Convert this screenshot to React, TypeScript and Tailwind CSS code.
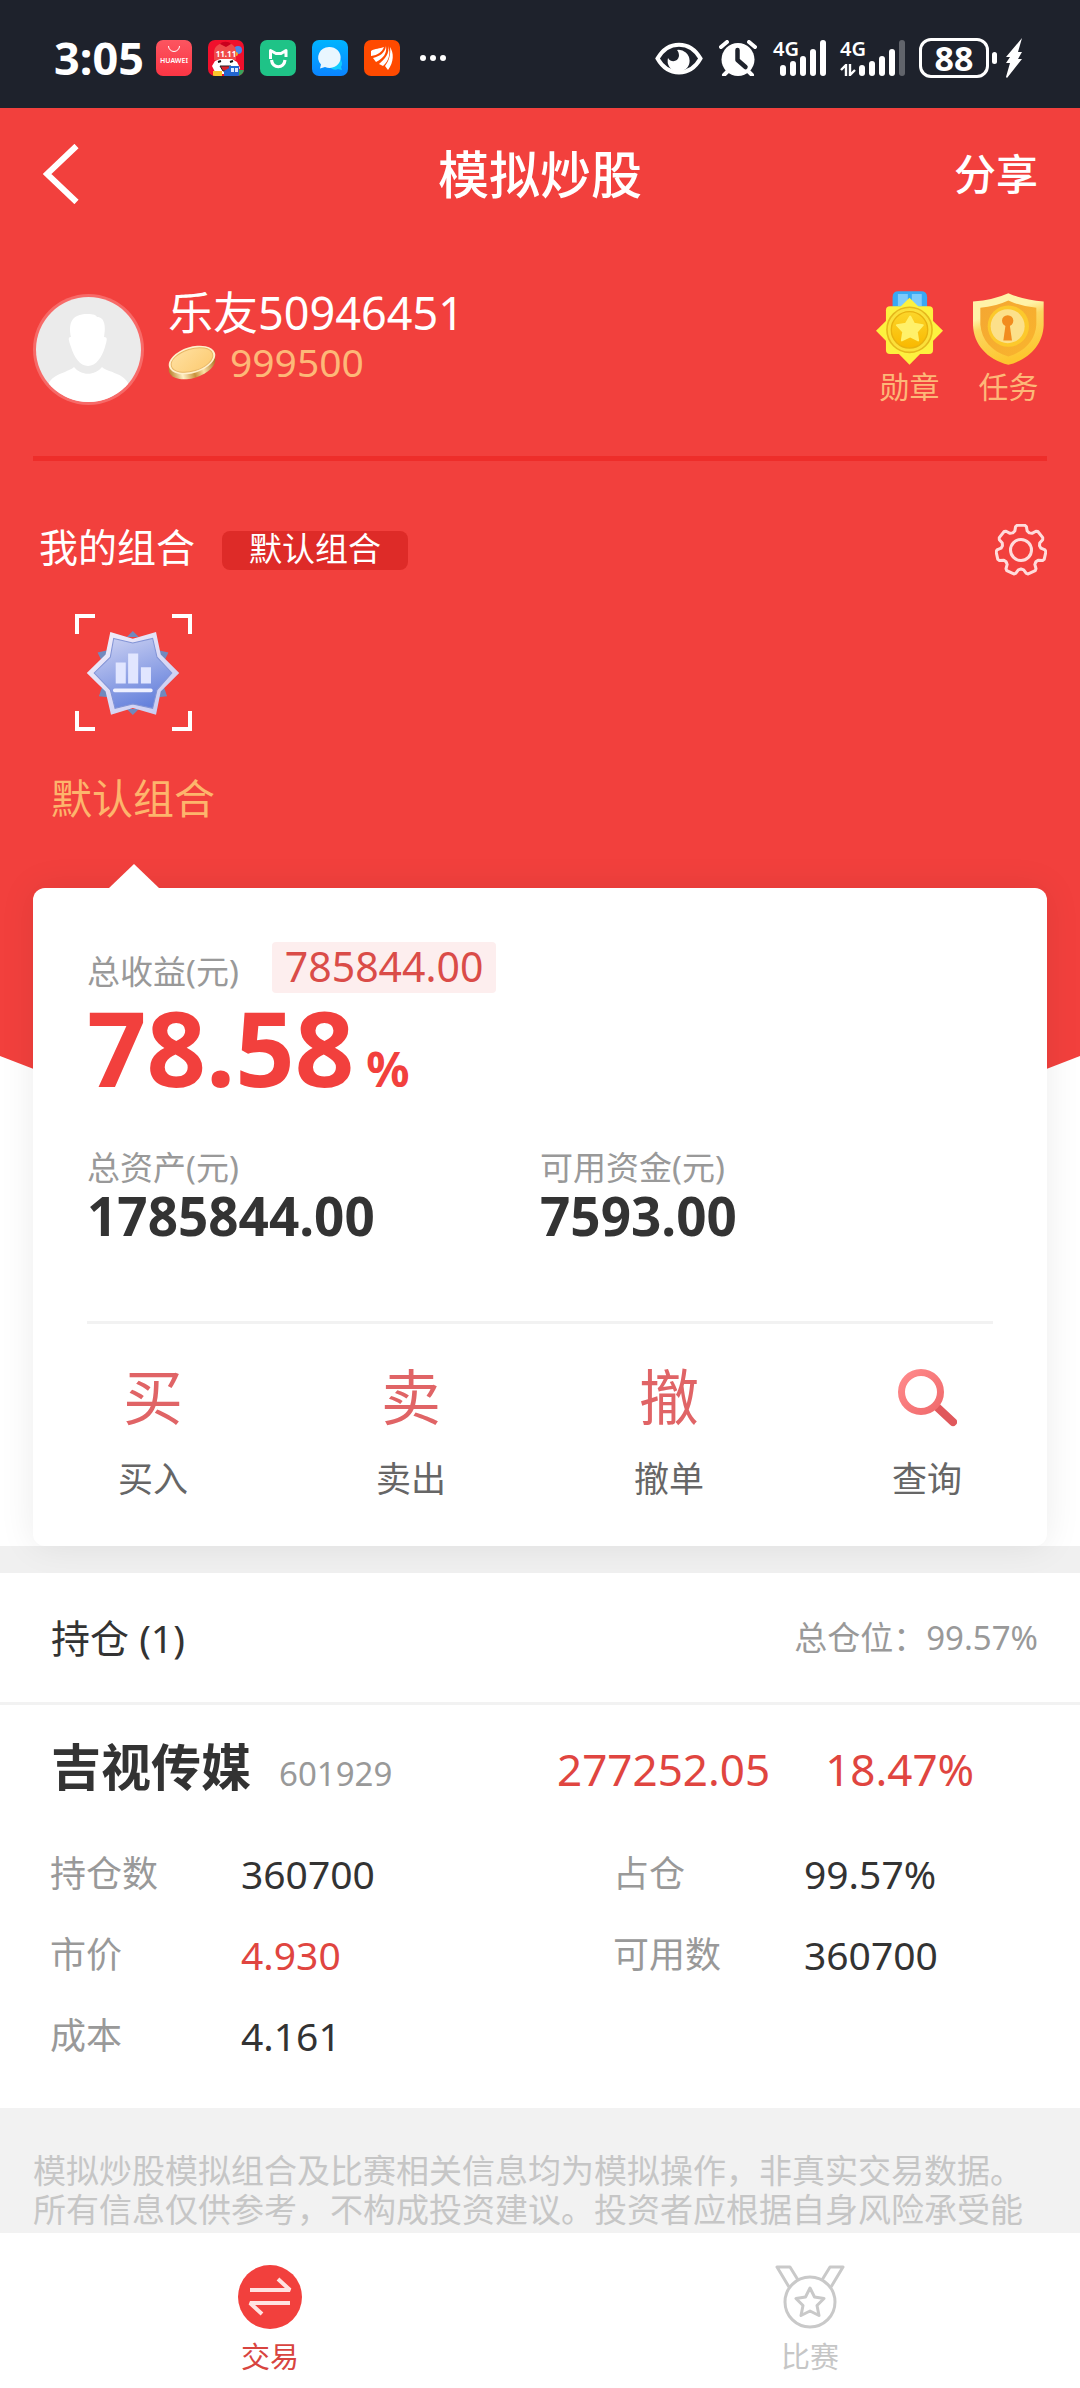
import React from 'react';
import clsx from 'clsx';

interface TradeAction {
  key: string;
  glyph?: string;
  label: string;
}

interface HoldingField {
  label: string;
  value: string;
  up?: boolean;
}

const actions: TradeAction[] = [
  { key: 'buy', glyph: '买', label: '买入' },
  { key: 'sell', glyph: '卖', label: '卖出' },
  { key: 'cancel', glyph: '撤', label: '撤单' },
  { key: 'query', label: '查询' },
];

const holdingFields: HoldingField[] = [
  { label: '持仓数', value: '360700' },
  { label: '占仓', value: '99.57%' },
  { label: '市价', value: '4.930', up: true },
  { label: '可用数', value: '360700' },
  { label: '成本', value: '4.161' },
];

// Outline of a cog with seven teeth, centred on 26,26
const gearPath = (() => {
  const points: string[] = [];
  const step = 360 / 7;
  for (let i = 0; i < 7; i += 1) {
    const base = i * step - 90;
    [[24, -13], [25, -9], [25, 9], [24, 13], [20, 18], [19, step / 2], [20, step - 18]].forEach(([r, offset]) => {
      const angle = ((base + offset) * Math.PI) / 180;
      points.push(`${(26 + r * Math.cos(angle)).toFixed(2)},${(26 + r * Math.sin(angle)).toFixed(2)}`);
    });
  }
  return points.join(' ');
})();

const NotificationIcons: React.FC = () => (
  <div className="flex items-center gap-4">
    <svg className="size-9" viewBox="0 0 36 36" aria-hidden="true">
      <defs>
        <linearGradient id="huawei" x1="0" y1="0" x2="0" y2="1">
          <stop offset="0" stopColor="#fc5560" />
          <stop offset="1" stopColor="#fb3544" />
        </linearGradient>
      </defs>
      <rect width="36" height="36" rx="7" fill="url(#huawei)" />
      <path d="M12.500 6a5.500 5.500 0 0 0 11 0" fill="none" stroke="#fff" strokeWidth="1" />
      <text x="18" y="23" textAnchor="middle" fill="#fff" fontSize="7" fontWeight="600" fontFamily="Noto Sans">
        HUAWEI
      </text>
    </svg>
    <svg className="size-9" viewBox="0 0 36 36" aria-hidden="true">
      <defs>
        <clipPath id="saleClip">
          <rect width="36" height="36" rx="7" />
        </clipPath>
      </defs>
      <g clipPath="url(#saleClip)">
        <rect width="36" height="36" fill="#f0102c" />
        <circle cx="30" cy="10" r="4" fill="#4a86e8" />
        <circle cx="28" cy="14" r="2" fill="#f6a623" />
        <path d="M6 20V13C6 6 11 3 18 3s10 4 10 9v8z" fill="#ef4a4a" />
        <path d="M12 4c2-3 9-3 11 0l-5 3z" fill="#c9001d" />
        <path d="M4 26l3-5 5-2h12l5 3 3 6-4 6H8z" fill="#fff" />
        <path d="M10 22l3-1M22 22l3-1" stroke="#111" strokeWidth="2" />
        <path d="M12 26h11l-2 5h-6z" fill="#d8232c" stroke="#222" strokeWidth="1" />
        <path d="M5 31h9v6H5z" fill="#fbc62c" />
        <path d="M16 31l5-3v-2h10v11H16z" fill="#2367d1" />
        <path d="M23 28h3v4h-3zM27 28h3v4h-3z" fill="#dfeaff" />
        <path d="M31 30h5v6h-5z" fill="#3aa45b" />
        <text x="18" y="17" textAnchor="middle" fill="#fff" fontSize="8" fontWeight="700" fontFamily="Noto Sans">
          11.11
        </text>
      </g>
    </svg>
    <svg className="size-9" viewBox="0 0 36 36" aria-hidden="true">
      <rect width="36" height="36" rx="7" fill="#1fc387" />
      <path d="M10.500 19v-8.500l5.500 3h5l5-3V17" fill="none" stroke="#fff" strokeWidth="3" strokeLinejoin="round" />
      <path d="M11.500 20c1 9 12.500 9 13.500 0" fill="none" stroke="#fff" strokeWidth="3.200" />
    </svg>
    <svg className="size-9" viewBox="0 0 36 36" aria-hidden="true">
      <defs>
        <linearGradient id="chatBg" x1="0" y1="0" x2="0" y2="1">
          <stop offset="0" stopColor="#00b4ff" />
          <stop offset="1" stopColor="#0a84ff" />
        </linearGradient>
      </defs>
      <rect width="36" height="36" rx="7" fill="url(#chatBg)" />
      <path d="M28 19a6 6 0 0 1 1 8l1 3-4-1a7 7 0 0 1-9-3z" fill="#12ccff" />
      <path d="M17 7a11 10.500 0 1 1-4 20l-5 1.500 1-4A11 10.500 0 0 1 17 7z" fill="#e9f6ff" />
    </svg>
    <svg className="size-9" viewBox="0 0 36 36" aria-hidden="true">
      <rect width="36" height="36" rx="7" fill="#ff4a00" />
      <path d="M20 7C16 9 11 8 7 11v5c7-1 11-4 13-9z" fill="#fff" />
      <path d="M22 6c-1 7-6 10-13 12l3 4c8-4 11-9 10-16z" fill="#fff" />
      <path d="M24 6c2 7-3 13-9 18l4 2c6-5 8-13 5-20z" fill="#fff" />
      <path d="M26 7c4 6 4 15-2 23l-3-4c4-5 6-12 5-19z" fill="#fff" />
    </svg>
    <svg className="ml-1 h-9 w-7" viewBox="0 0 28 36" aria-hidden="true" fill="#fff">
      <circle cx="3" cy="18" r="3" />
      <circle cx="13" cy="18" r="3" />
      <circle cx="23" cy="18" r="3" />
    </svg>
  </div>
);

const SignalBars: React.FC<{ weak?: boolean }> = ({ weak }) => (
  <div className={clsx('relative h-9', weak ? 'w-[65px]' : 'w-[53px]')}>
    <span className="absolute -top-px left-0 text-[20px] leading-5 font-semibold">4G</span>
    {weak && (
      <svg className="absolute bottom-0 left-0 h-3 w-4" viewBox="0 0 16 12" aria-hidden="true">
        <path d="M6 12V1L1 6M10 0v11l5-5" fill="none" stroke="#fff" strokeWidth="2.400" />
      </svg>
    )}
    <svg className="absolute right-0 bottom-0 h-9 w-[46px]" viewBox="0 0 46 36" fill="#fff" aria-hidden="true">
      <rect x="0" y="25" width="6" height="11" rx="3" />
      <rect x="10" y="21" width="6" height="15" rx="3" />
      <rect x="20" y="16" width="6" height="20" rx="3" />
      <rect x="30" y="9" width="6" height="27" rx="3" />
      <rect x="40" y="0" width="6" height="36" rx="3" fillOpacity={weak ? 0.3 : 1} />
    </svg>
  </div>
);

const StatusBar: React.FC = () => (
  <div className="flex h-[108px] items-center justify-between bg-[#1e222c] pt-2 pr-[57px] pl-[54px] text-white">
    <div className="flex items-center gap-3">
      <span className="text-[45px] leading-[50px] font-bold">3:05</span>
      <NotificationIcons />
    </div>
    <div className="flex items-center">
      <svg className="h-[33px] w-12" viewBox="0 0 48 33" aria-hidden="true">
        <path d="M2.500 16.500C13-2 35-2 45.500 16.500 35 35 13 35 2.500 16.500z" fill="none" stroke="#fff" strokeWidth="4" />
        <path d="M22 8a11 11 0 1 1-9 8c3 5 10 4 11-2 0-3-1-5-2-6z" fill="#fff" />
      </svg>
      <svg className="ml-4 h-9 w-[38px]" viewBox="0 0 38 36" aria-hidden="true">
        <circle cx="19" cy="19.500" r="16.500" fill="#fff" />
        <path d="M2 7l6-5M36 7l-6-5M5 35l5-5M33 35l-5-5" stroke="#fff" strokeWidth="4" strokeLinecap="round" />
        <path d="M18.500 10v10l8 7" fill="none" stroke="#1e222c" strokeWidth="4.500" strokeLinecap="round" strokeLinejoin="round" />
      </svg>
      <div className="ml-4">
        <SignalBars />
      </div>
      <div className="ml-3.5">
        <SignalBars weak />
      </div>
      <div className="ml-3.5 flex h-10 w-[70px] items-center justify-center rounded-xl border-3 border-white text-[34px] leading-8 font-bold">
        88
      </div>
      <span className="ml-[3px] h-3 w-[5px] rounded-full bg-white" />
      <svg className="ml-2 h-10 w-[18px]" viewBox="0 0 18 40" aria-hidden="true">
        <path d="M17 0L1 19h4l-4 6h4L1 39l1 1 15-19h-4l4-7h-4z" fill="#fff" />
      </svg>
    </div>
  </div>
);

const CoinIcon: React.FC = () => (
  <svg className="h-9 w-12" viewBox="0 0 48 36" aria-hidden="true">
    <defs>
      <linearGradient id="coinEdge" x1="0" y1="0" x2="1" y2="0">
        <stop offset="0" stopColor="#b9812c" />
        <stop offset="0.250" stopColor="#fff0c4" />
        <stop offset="0.500" stopColor="#c9923b" />
        <stop offset="0.700" stopColor="#f9e2a6" />
        <stop offset="1" stopColor="#a8701f" />
      </linearGradient>
      <linearGradient id="coinFace" x1="0" y1="0" x2="1" y2="1">
        <stop offset="0" stopColor="#ffe0a0" />
        <stop offset="1" stopColor="#fccb72" />
      </linearGradient>
    </defs>
    <ellipse cx="24" cy="21" rx="24" ry="13" transform="rotate(-17 24 21)" fill="url(#coinEdge)" />
    <ellipse cx="24" cy="16" rx="24" ry="13" transform="rotate(-17 24 16)" fill="#fff0cc" />
    <ellipse cx="24" cy="16" rx="21.500" ry="11" transform="rotate(-17 24 16)" fill="url(#coinFace)" stroke="#e8b765" strokeWidth="1" />
  </svg>
);

const MedalIcon: React.FC = () => (
  <svg className="h-[74px] w-[67px]" viewBox="0 0 202 221" aria-hidden="true">
    <defs>
      <linearGradient id="medalCore" x1="0" y1="0" x2="0" y2="1">
        <stop offset="0" stopColor="#fcd62a" />
        <stop offset="1" stopColor="#f9b800" />
      </linearGradient>
    </defs>
    <path d="M50 50V18Q50 0 68 0H136Q154 0 154 18V50z" fill="#38a8f4" />
    <path d="M66 44V8h30v36zM108 44V8h30v36z" fill="#7dcbfb" />
    <rect x="30" y="45" width="142" height="144" rx="12" fill="#fdf13f" />
    <path d="M101 19L202 119 101 221 0 119z" fill="#fdf13f" />
    <circle cx="101" cy="116" r="68" fill="#fbe03a" stroke="#e6b81c" strokeWidth="5" />
    <circle cx="101" cy="116" r="55" fill="url(#medalCore)" stroke="#e9b20f" strokeWidth="4" />
    <path
      d="M103 76l12 22 26 4-18 20 4 26-24-12-25 12 4-26-19-20 27-4z"
      fill="#fff16a"
      stroke="#fff16a"
      strokeWidth="6"
      strokeLinejoin="round"
    />
  </svg>
);

const ShieldIcon: React.FC = () => (
  <svg className="h-[74px] w-[71px]" viewBox="0 -4 213 221" aria-hidden="true">
    <defs>
      <linearGradient id="shieldRim" x1="0" y1="0" x2="0.300" y2="1">
        <stop offset="0.350" stopColor="#fff3a8" />
        <stop offset="0.500" stopColor="#fcd660" />
        <stop offset="1" stopColor="#fdc62f" />
      </linearGradient>
      <linearGradient id="shieldBody" x1="0" y1="0" x2="1" y2="1">
        <stop offset="0" stopColor="#f4a632" />
        <stop offset="1" stopColor="#f9b52d" />
      </linearGradient>
    </defs>
    <path d="M106 2Q150 22 212 27V98C210 155 170 200 106 217 42 200 2 155 0 98V27Q62 22 106 2z" fill="url(#shieldRim)" />
    <path d="M106 24Q145 42 190 46V96C187 142 158 176 106 192 54 176 26 142 22 96V46Q68 42 106 24z" fill="url(#shieldBody)" />
    <circle cx="106" cy="101" r="62" fill="#fcc92c" />
    <circle cx="104" cy="101" r="51" fill="#fce08a" />
    <circle cx="104" cy="85" r="17" fill="#f28c1e" />
    <path d="M98 95h12l7 49H91z" fill="#f28c1e" />
  </svg>
);

const PortfolioBadge: React.FC = () => (
  <svg className="h-[84px] w-[94px]" viewBox="0 0 275 250" aria-hidden="true">
    <defs>
      <linearGradient id="badgeFill" x1="0.200" y1="0" x2="0.600" y2="1">
        <stop offset="0" stopColor="#c9cff2" />
        <stop offset="1" stopColor="#6581dc" />
      </linearGradient>
      <linearGradient id="badgeRim" x1="0" y1="0" x2="1" y2="1">
        <stop offset="0" stopColor="#f5f0fb" />
        <stop offset="1" stopColor="#c3c8f1" />
      </linearGradient>
    </defs>
    <path d="M137 0l18 18h-36zM32 64l36-8-22 36zM243 64l-36-8 22 36zM36 194l34 4-22-38zM239 194l-34 4 22-38zM137 250l18-18h-36z" fill="#7189bd" />
    <path d="M70 3l67 20 69-20 14 67 55 55-55 55-14 69-69-20-65 20-16-69-56-55 56-55z" fill="url(#badgeRim)" />
    <path d="M80 22l57 14 59-14 13 56 44 47-44 50-13 55-59-13-53 13-14-55-48-50 48-47z" fill="url(#badgeFill)" stroke="#8294d6" strokeWidth="3" />
    <path d="M86 94h30v62H86zM123 67h30v89h-30zM161 108h30v48h-30z" fill="#e1e6ff" />
    <rect x="78" y="171" width="118" height="11" rx="5" fill="#eef0ff" />
  </svg>
);

const ProfileRow: React.FC = () => (
  <div className="mt-[47px] flex items-start justify-between border-b-5 border-[#ee2d2a] pb-[51px]">
    <div className="flex items-start">
      <svg className="mt-[7px] size-[111px]" viewBox="0 0 111 111" role="img" aria-label="头像">
        <defs>
          <clipPath id="avatarClip">
            <circle cx="55.500" cy="55.500" r="52.500" />
          </clipPath>
        </defs>
        <circle cx="55.500" cy="55.500" r="55.500" fill="#f76a68" />
        <g clipPath="url(#avatarClip)">
          <rect width="111" height="111" fill="#ebebeb" />
          <path
            d="M38 43c-3-14 1-23 16-23 7 0 9 1 10 3 8 0 9 10 7 20 4 0 3 3 1 10-3 10-9 19-17 19s-14-9-17-19c-3-8-3-10 0-10z"
            fill="#fff"
          />
          <path d="M41 73c7 9 21 9 28 0 5 5 21 6 26 16v22H16V89c4-9 20-11 25-16z" fill="#fff" />
        </g>
      </svg>
      <div className="ml-6">
        <p className="text-[45px] leading-[52px] text-white">乐友50946451</p>
        <p className="flex items-center gap-3.5 text-[39px] leading-[46px] text-[#fdb878]">
          <CoinIcon />
          999500
        </p>
      </div>
    </div>
    <div className="flex gap-[30px] pt-1 text-[30px] leading-9 text-[#fdb878]">
      <button type="button" className="flex flex-col items-center gap-1">
        <MedalIcon />
        勋章
      </button>
      <button type="button" className="flex flex-col items-center gap-1 pr-[3px]">
        <ShieldIcon />
        任务
      </button>
    </div>
  </div>
);

const PortfolioPicker: React.FC = () => (
  <>
    <div className="mt-[63px] flex items-center">
      <h2 className="pb-1.5 pl-[6px] text-[39px] leading-[46px] text-white">我的组合</h2>
      <span className="ml-[27px] rounded-lg bg-[#de2b28] px-[27px] pb-1 text-[33px] leading-[35px] text-white">默认组合</span>
      <button type="button" className="ml-auto" aria-label="设置">
        <svg className="size-[52px]" viewBox="0 0 52 52" fill="none" stroke="#ffdcdb" strokeWidth="3" strokeLinejoin="round">
          <polygon points={gearPath} />
          <circle cx="26" cy="26" r="10.500" />
        </svg>
      </button>
    </div>
    <button type="button" className="mt-[38px] ml-[18px] flex flex-col items-center">
      <span className="relative flex size-[117px] items-center justify-center">
        <span className="absolute top-0 left-0 size-5 border-t-4 border-l-4 border-white" />
        <span className="absolute top-0 right-0 size-5 border-t-4 border-r-4 border-white" />
        <span className="absolute bottom-0 left-0 size-5 border-b-4 border-l-4 border-white" />
        <span className="absolute right-0 bottom-0 size-5 border-r-4 border-b-4 border-white" />
        <PortfolioBadge />
      </span>
      <span className="mt-[42px] text-[41px] leading-[50px] text-[#fdb56c]">默认组合</span>
    </button>
  </>
);

const SearchIcon: React.FC = () => (
  <svg className="size-[60px]" viewBox="0 0 60 60" fill="none" aria-hidden="true">
    <defs>
      <linearGradient id="lens" x1="0" y1="0" x2="1" y2="1">
        <stop offset="0" stopColor="#ff8a8b" />
        <stop offset="1" stopColor="#f06a6c" />
      </linearGradient>
    </defs>
    <path d="M41 41l15 14" stroke="#e0585c" strokeWidth="8" strokeLinecap="round" />
    <circle cx="24" cy="25" r="19.500" stroke="url(#lens)" strokeWidth="7" />
  </svg>
);

const SummaryCard: React.FC = () => (
  <section className="relative z-10 mx-[33px] -mt-[218px] rounded-xl bg-white px-[54px] pt-[54px] pb-[42px] shadow-[0_0_36px_rgba(0,0,0,0.08)]">
    <svg className="absolute -top-6 left-[76px] h-6 w-[50px]" viewBox="0 0 50 24" aria-hidden="true">
      <path d="M0 24L25 0l25 24z" fill="#fff" />
    </svg>
    <div className="flex items-end gap-[33px]">
      <span className="text-[33px] leading-[42px] text-[#999]">总收益(元)</span>
      <span className="rounded-sm bg-[#fdeeee] px-[13px] pb-0.5 text-[41px] leading-[49px] text-[#da4c48]">785844.00</span>
    </div>
    <p className="flex items-baseline gap-3 text-[104px] leading-[108px] font-bold text-[#f2403d]">
      78.58
      <span className="text-[48px] leading-none">%</span>
    </p>
    <dl className="mt-[47px] grid grid-cols-2">
      <div>
        <dt className="text-[33px] leading-10 text-[#999]">总资产(元)</dt>
        <dd className="text-[53px] leading-[56px] font-bold text-[#333]">1785844.00</dd>
      </div>
      <div>
        <dt className="text-[33px] leading-10 text-[#999]">可用资金(元)</dt>
        <dd className="text-[53px] leading-[56px] font-bold text-[#333]">7593.00</dd>
      </div>
    </dl>
    <div className="mt-[77px] flex justify-between border-t-3 border-[#f2f2f2] pt-[37px]">
      {actions.map((action) => (
        <button key={action.key} type="button" className="flex w-[132px] flex-col items-center gap-[21px]">
          <span className="flex h-[72px] items-center text-[60px] leading-[72px] text-[#e06466]">
            {action.glyph ?? <SearchIcon />}
          </span>
          <span className="text-[35px] leading-[50px] text-[#666]">{action.label}</span>
        </button>
      ))}
    </div>
  </section>
);

const Holdings: React.FC = () => (
  <section className="relative z-20 bg-white">
    <div className="flex items-center justify-between border-b-3 border-[#f2f2f2] pr-[42px] pl-[51px]">
      <h2 className="text-[39px] leading-[129px] text-[#333]">持仓 (1)</h2>
      <span className="text-[33px] leading-[126px] text-[#999]">总仓位：99.57%</span>
    </div>
    <div className="grid grid-cols-[506px_1fr] items-baseline pt-7 pl-[51px]">
      <div className="flex items-baseline gap-7">
        <h3 className="text-[50px] leading-[68px] font-bold text-[#333]">吉视传媒</h3>
        <span className="text-[33px] text-[#999]">601929</span>
      </div>
      <div className="flex gap-[55px] text-[44px] leading-[68px] text-[#e04540]">
        <span>277252.05</span>
        <span>18.47%</span>
      </div>
    </div>
    <dl className="grid grid-cols-[563px_1fr] pt-[30px] pb-8 pl-[50px]">
      {holdingFields.map((field) => (
        <div key={field.label} className="flex leading-[81px]">
          <dt className="w-[191px] text-[36px] text-[#999]">{field.label}</dt>
          <dd className={clsx('text-[39px]', field.up ? 'text-[#e04540]' : 'text-[#333]')}>{field.value}</dd>
        </div>
      ))}
    </dl>
  </section>
);

const TabBar: React.FC = () => (
  <nav className="grid grid-cols-2 bg-white pt-8 pb-3.5 text-[29px] leading-9">
    <button type="button" className="flex flex-col items-center gap-2.5 text-[#d8443f]">
      <svg className="size-16" viewBox="0 0 64 64" fill="none" aria-hidden="true">
        <circle cx="32" cy="32" r="32" fill="#f2403d" />
        <path d="M12 25h40L40 14M52 38H12l12 11" stroke="#ffe2e1" strokeWidth="4" strokeLinejoin="bevel" />
      </svg>
      交易
    </button>
    <button type="button" className="flex flex-col items-center gap-2.5 text-[#c6c6c6]">
      <svg className="h-16 w-[70px]" viewBox="0 0 70 64" fill="none" stroke="#c9c9c9" strokeWidth="3" strokeLinejoin="round" aria-hidden="true">
        <circle cx="35" cy="37" r="25" />
        <path d="M14 22L2 2h13l8 13M56 22L68 2H55l-8 13" />
        <path d="M35 23l4.500 9 9.500 1.500-7 7 2 10-9-4.500-9 4.500 2-10-7-7 9.500-1.500z" />
      </svg>
      比赛
    </button>
  </nav>
);

const App: React.FC = () => (
  <div className="flex min-h-screen flex-col bg-white font-['Noto_Sans','Noto_Sans_CJK_SC',sans-serif]">
    <StatusBar />
    <header className="bg-[#f2403d] px-[33px] pb-[283px] [clip-path:polygon(0_0,100%_0,100%_calc(100%-50px),88%_100%,12%_100%,0_calc(100%-50px))]">
      <div className="grid h-[132px] grid-cols-3 items-center text-white">
        <button type="button" className="justify-self-start pl-2.5" aria-label="返回">
          <svg className="h-[60px] w-9" viewBox="0 0 36 60" fill="none" stroke="#fff" strokeWidth="6" aria-hidden="true">
            <path d="M33.500 2L4 30l29.500 28" />
          </svg>
        </button>
        <h1 className="text-center text-[51px] leading-[60px] font-medium">模拟炒股</h1>
        <button type="button" className="justify-self-end pr-[9px] text-[42px] leading-[60px] font-medium">
          分享
        </button>
      </div>
      <ProfileRow />
      <PortfolioPicker />
    </header>
    <SummaryCard />
    <div className="h-[27px] bg-[#f0f0f0]" />
    <Holdings />
    <p className="flex-1 bg-[#f2f2f2] px-[33px] pt-[43px] pb-1 text-[33px] leading-[39px] text-[#c6c6c6]">
      模拟炒股模拟组合及比赛相关信息均为模拟操作，非真实交易数据。所有信息仅供参考，不构成投资建议。投资者应根据自身风险承受能
    </p>
    <TabBar />
  </div>
);

export default App;
